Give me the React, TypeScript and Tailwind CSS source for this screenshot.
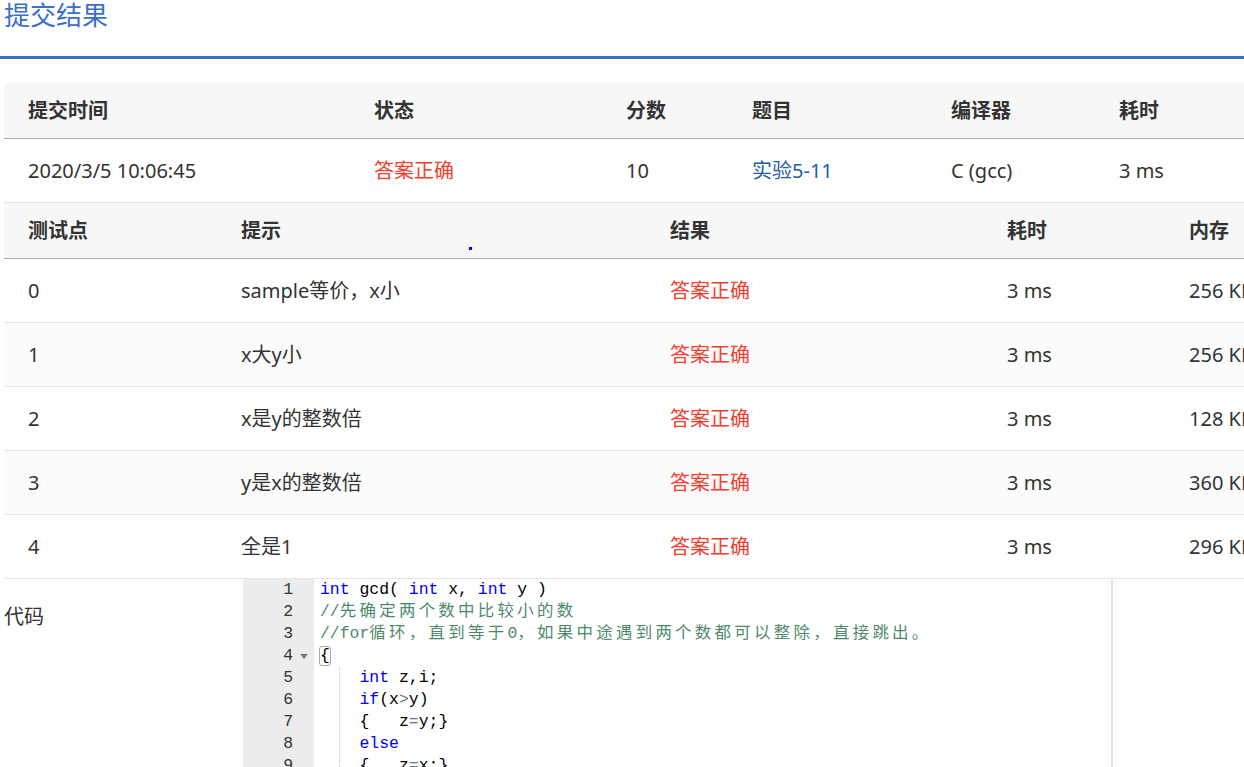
import React from "react";

const FONT = { fontFamily: '"Noto Sans", "Noto Sans CJK SC", sans-serif' };
const MONO = { fontFamily: '"Liberation Mono", "Noto Sans CJK SC", monospace' };

const RED = "text-[#f5402d]";

function Cell({ w, children, className = "" }: { w: string; children?: React.ReactNode; className?: string }) {
  return <div className={`${w} shrink-0 pl-[24px] flex items-center whitespace-nowrap ${className}`}>{children}</div>;
}

type Tok = { t: string; c?: "kw" | "cm" | "op" | "cjk" };

const CJK = ({ s }: { s: string }) => <span className="tracking-[3.29px]">{s}</span>;

function renderTok(tok: Tok, i: number) {
  if (tok.c === "kw") return <span key={i} className="text-[#0000ff]">{tok.t}</span>;
  if (tok.c === "op") return <span key={i} className="text-[#687687]">{tok.t}</span>;
  return <span key={i}>{tok.t}</span>;
}

function Comment({ parts }: { parts: (string | [string])[] }) {
  return (
    <span className="text-[#4d8a6a]">
      {parts.map((p, i) => (typeof p === "string" ? <span key={i}>{p}</span> : <CJK key={i} s={p[0]} />))}
    </span>
  );
}

const lines: React.ReactNode[] = [
  <>{[{ t: "int", c: "kw" }, { t: " gcd( " }, { t: "int", c: "kw" }, { t: " x, " }, { t: "int", c: "kw" }, { t: " y )" }].map((t, i) => renderTok(t as Tok, i))}</>,
  <Comment parts={["//", ["先确定两个数中比较小的数"]]} />,
  <Comment parts={["//for", ["循环，直到等于"], "0", ["，如果中途遇到两个数都可以整除，直接跳出。"]]} />,
  <span className="inline-block border border-[#aaa] rounded-[3px] leading-[18px] -ml-px">{"{"}</span>,
  <>{[{ t: "    " }, { t: "int", c: "kw" }, { t: " z,i;" }].map((t, i) => renderTok(t as Tok, i))}</>,
  <>{[{ t: "    " }, { t: "if", c: "kw" }, { t: "(x" }, { t: ">", c: "op" }, { t: "y)" }].map((t, i) => renderTok(t as Tok, i))}</>,
  <>{[{ t: "    {   z" }, { t: "=", c: "op" }, { t: "y;}" }].map((t, i) => renderTok(t as Tok, i))}</>,
  <>{[{ t: "    " }, { t: "else", c: "kw" }].map((t, i) => renderTok(t as Tok, i))}</>,
  <>{[{ t: "    {   z" }, { t: "=", c: "op" }, { t: "x;}" }].map((t, i) => renderTok(t as Tok, i))}</>,
  <>{[{ t: "    " }, { t: "for", c: "kw" }, { t: "(i" }, { t: "=", c: "op" }, { t: "z;i" }, { t: ">", c: "op" }, { t: "0;i--)" }].map((t, i) => renderTok(t as Tok, i))}</>,
];

const rows = [
  { id: "0", hint: "sample等价，x小", mem: "256 KB" },
  { id: "1", hint: "x大y小", mem: "256 KB" },
  { id: "2", hint: "x是y的整数倍", mem: "128 KB" },
  { id: "3", hint: "y是x的整数倍", mem: "360 KB" },
  { id: "4", hint: "全是1", mem: "296 KB" },
];

export default function App() {
  return (
    <div className="w-[1244px] h-[767px] overflow-hidden bg-white text-[#333]" style={FONT}>
      <div className="h-[59px] border-b-[3px] border-[#3b6fca]">
        <div className="pl-[4px] text-[26px] leading-[30px] text-[#3b6fca]">提交结果</div>
      </div>

      <div className="mt-[24px] ml-[4px] w-[1400px] text-[20px]">
        {/* table 1 header */}
        <div className="flex h-[56px] bg-[#f7f7f7] border-b border-[#aaaaaa] font-bold">
          <Cell w="w-[346px]">提交时间</Cell>
          <Cell w="w-[252px]">状态</Cell>
          <Cell w="w-[126px]">分数</Cell>
          <Cell w="w-[199px]">题目</Cell>
          <Cell w="w-[168px]">编译器</Cell>
          <Cell w="w-[200px]">耗时</Cell>
        </div>
        <div className="flex h-[64px] border-b border-[#e5e5e5]">
          <Cell w="w-[346px]">2020/3/5 10:06:45</Cell>
          <Cell w="w-[252px]" className={RED}>答案正确</Cell>
          <Cell w="w-[126px]">10</Cell>
          <Cell w="w-[199px]" className="text-[#1f5ba6]">实验5-11</Cell>
          <Cell w="w-[168px]">C (gcc)</Cell>
          <Cell w="w-[200px]">3 ms</Cell>
        </div>

        {/* table 2 header */}
        <div className="relative flex h-[56px] bg-[#f7f7f7] border-b border-[#aaaaaa] font-bold">
          <Cell w="w-[213px]">测试点</Cell>
          <Cell w="w-[429px]">提示</Cell>
          <Cell w="w-[337px]">结果</Cell>
          <Cell w="w-[182px]">耗时</Cell>
          <Cell w="w-[200px]">内存</Cell>
          <div className="absolute left-[465px] top-[44px] w-[3px] h-[3px] bg-[#0000ff]" />
        </div>
        {rows.map((r, i) => (
          <div key={r.id} className={`flex h-[64px] border-b border-[#e5e5e5] ${i % 2 === 1 ? "bg-[#fbfbfb]" : "bg-white"}`}>
            <Cell w="w-[213px]">{r.id}</Cell>
            <Cell w="w-[429px]">{r.hint}</Cell>
            <Cell w="w-[337px]" className={RED}>答案正确</Cell>
            <Cell w="w-[182px]">3 ms</Cell>
            <Cell w="w-[200px]">{r.mem}</Cell>
          </div>
        ))}
      </div>

      {/* code section */}
      <div className="flex">
        <div className="w-[243px] shrink-0 pl-[4px] pt-[24px] text-[20px] leading-[28px]">代码</div>
        <div className="relative flex w-[870px] border-r-2 border-[#e3e3e3]" style={MONO}>
          <div className="w-[71px] shrink-0 bg-[#ececec] text-[16.45px] leading-[22px] text-[#333]">
            {lines.map((_, i) => (
              <div key={i} className="relative h-[22px] pr-[21px] text-right">
                {i + 1}
                {i === 3 && (
                  <svg className="absolute right-[6px] top-[9px]" width="8" height="5" viewBox="0 0 8 5">
                    <path d="M0 0 L8 0 L4 5 Z" fill="#777" />
                  </svg>
                )}
              </div>
            ))}
          </div>
          <div className="relative pl-[6px] text-[16.45px] leading-[22px] text-[#000] whitespace-pre">
            {lines.map((l, i) => (
              <div key={i} className="h-[22px]">{l}</div>
            ))}
            <div className="absolute left-[25px] top-[88px] bottom-0 border-l border-dotted border-[#c8c8c8]" />
          </div>
        </div>
      </div>
    </div>
  );
}
